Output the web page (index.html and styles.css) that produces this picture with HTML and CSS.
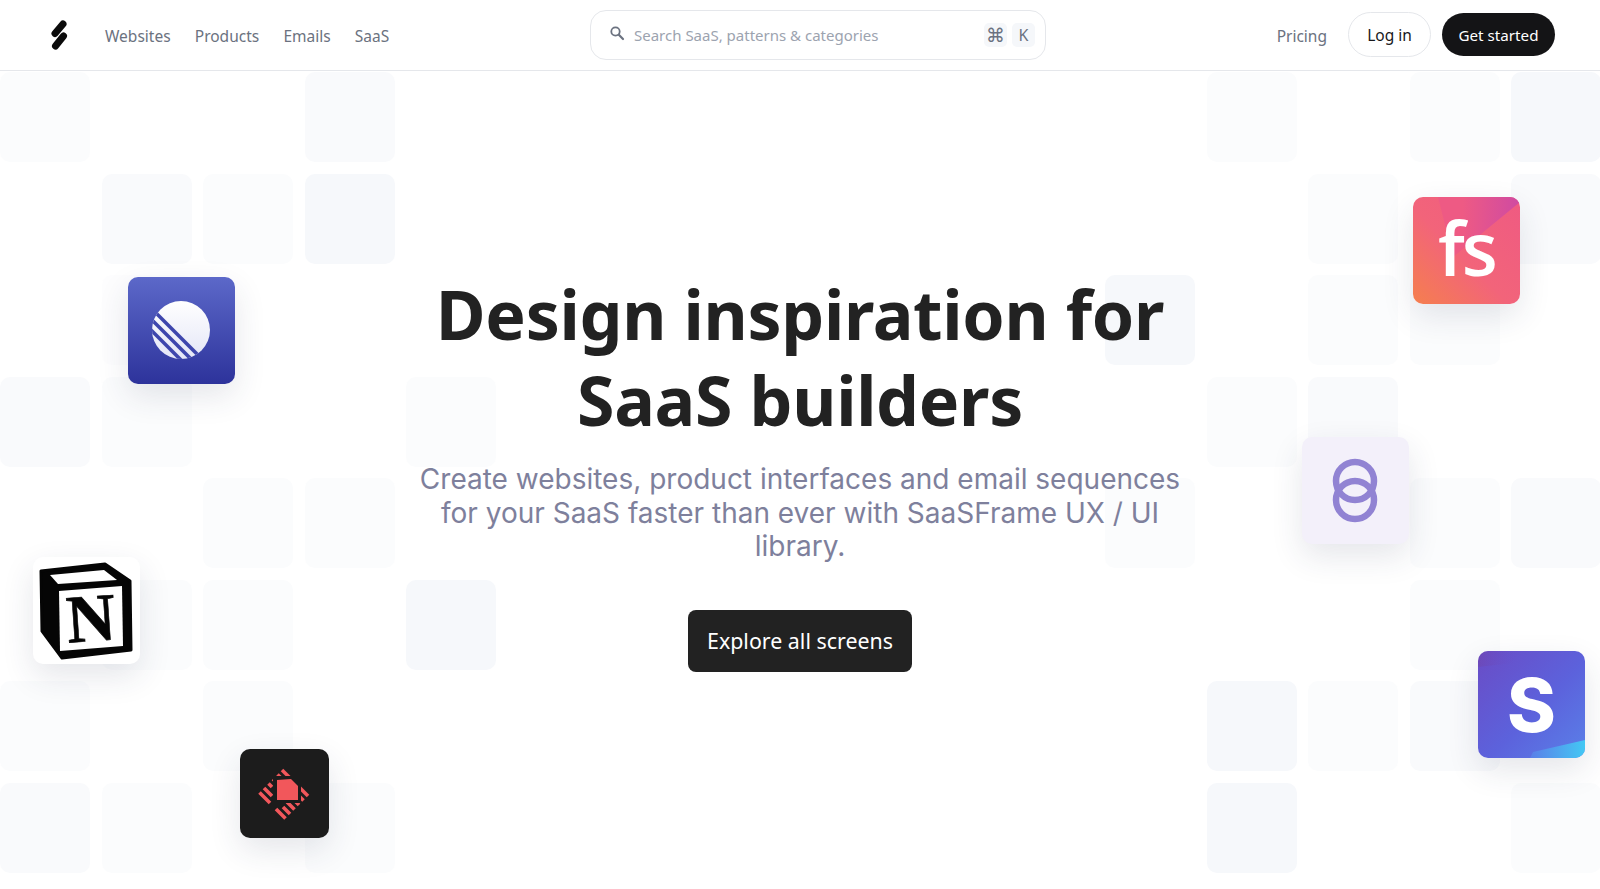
FILE: index.html
```html
<!DOCTYPE html>
<html lang="en">
<head>
    <meta charset="UTF-8">
    <meta name="viewport" content="width=device-width, initial-scale=1.0">
    <title>SaaSFrame</title>
    <link rel="stylesheet" href="styles.css">
</head>
<body>
    <header class="topbar">
        <div class="topbar-left">
            <a class="logo" href="#">
                <svg width="18" height="30" viewBox="0 0 18 30">
                    <g fill="none" stroke="#0b0b0b" stroke-width="7" stroke-linecap="round">
                        <path d="M13 4 L5 13.5"/>
                        <path d="M13.5 16 L5.5 26"/>
                    </g>
                </svg>
            </a>
            <nav class="nav-links">
                <a href="#">Websites</a>
                <a href="#">Products</a>
                <a href="#">Emails</a>
                <a href="#">SaaS</a>
            </nav>
        </div>

        <div class="search">
            <svg class="search-icon" width="16" height="16" viewBox="0 0 16 16">
                <circle cx="6.5" cy="6.5" r="4.2" fill="none" stroke="#6b7280" stroke-width="1.8"/>
                <path d="M9.8 9.8 L14 14" stroke="#6b7280" stroke-width="2.2" stroke-linecap="round"/>
            </svg>
            <span class="search-text">Search SaaS, patterns &amp; categories</span>
            <span class="key key-cmd">⌘</span>
            <span class="key">K</span>
        </div>

        <div class="topbar-right">
            <a class="pricing" href="#">Pricing</a>
            <a class="btn-login" href="#">Log in</a>
            <a class="btn-start" href="#">Get started</a>
        </div>
    </header>

    <section class="hero">
        <div class="tiles tiles-left">
            <div class="tile t3"></div><div></div><div></div><div class="tile t2"></div><div></div>
            <div></div><div class="tile t2"></div><div class="tile t3"></div><div class="tile t1"></div><div></div>
            <div></div><div class="tile t4"></div><div></div><div></div><div></div>
            <div class="tile t2"></div><div class="tile t3"></div><div></div><div></div><div class="tile t3"></div>
            <div></div><div></div><div class="tile t3"></div><div class="tile t3"></div><div></div>
            <div></div><div class="tile t3"></div><div class="tile t3"></div><div></div><div class="tile t1"></div>
            <div class="tile t3"></div><div></div><div class="tile t3"></div><div></div><div></div>
            <div class="tile t2"></div><div class="tile t3"></div><div></div><div class="tile t3"></div><div></div>
        </div>

        <div class="tiles tiles-right">
            <div></div><div class="tile t3"></div><div></div><div class="tile t3"></div><div class="tile t1"></div>
            <div></div><div></div><div class="tile t3"></div><div></div><div class="tile t2"></div>
            <div class="tile t1"></div><div></div><div class="tile t3"></div><div class="tile t3"></div><div></div>
            <div></div><div class="tile t3"></div><div class="tile t2"></div><div></div><div></div>
            <div class="tile t3"></div><div></div><div></div><div class="tile t3"></div><div class="tile t2"></div>
            <div></div><div></div><div></div><div class="tile t3"></div><div></div>
            <div></div><div class="tile t1"></div><div class="tile t3"></div><div class="tile t2"></div><div></div>
            <div></div><div class="tile t1"></div><div></div><div></div><div class="tile t3"></div>
        </div>

        <div class="app app-linear">
            <svg width="107" height="107" viewBox="0 0 107 107">
                <defs>
                    <linearGradient id="discFill" x1="0" y1="0" x2="0" y2="1">
                        <stop offset="0" stop-color="#ffffff"/>
                        <stop offset="1" stop-color="#e4e6f7"/>
                    </linearGradient>
                    <clipPath id="discClip"><circle cx="53" cy="53" r="29"/></clipPath>
                </defs>
                <circle cx="53" cy="53" r="29" fill="url(#discFill)"/>
                <g clip-path="url(#discClip)" stroke="#3e46ad" stroke-width="3.6">
                    <path d="M14 22 L84 92"/>
                    <path d="M14 33 L74 93"/>
                    <path d="M14 44 L64 94"/>
                </g>
            </svg>
        </div>

        <div class="app app-notion">
            <svg width="107" height="107" viewBox="0 0 107 107">
                <path d="M8 14 L72 7 L97 24 L98 93 L29 101 L9 74 Z" fill="#050505" stroke="#050505" stroke-width="3" stroke-linejoin="round"/>
                <path d="M17 18 L71 13 L84 23 L25 27 Z" fill="#fff"/>
                <path d="M26 34 L89 29 L90 89 L27 94 Z" fill="#fff"/>
                <text class="notion-n" x="58" y="84" text-anchor="middle" transform="rotate(-4 58 62)">N</text>
            </svg>
        </div>

        <div class="app app-rocket">
            <svg width="89" height="89" viewBox="0 0 89 89">
                <g stroke="#f2575b" stroke-width="3.6">
                    <path d="M42 21 L68 47"/>
                    <path d="M37.5 25.5 L63.5 51.5"/>
                    <path d="M33 30 L38 35 M52 49 L59 56"/>
                    <path d="M28.5 34.5 L32 38 M47 53 L54.5 60.5"/>
                    <path d="M24 39 L32 47 M43 58 L50 65"/>
                    <path d="M19.5 43.5 L30 54 M36 60 L45.5 69.5"/>
                </g>
                <rect x="33" y="27" width="28" height="27" fill="#1c1c1c"/>
                <path d="M37 31 L51 30 L58 37 L58 51 L37 51 Z" fill="#f2575b"/>
            </svg>
        </div>

        <div class="app app-fs">
            <svg class="fs-corner" width="107" height="107" viewBox="0 0 107 107">
                <defs>
                    <linearGradient id="cornerFill" x1="0" y1="0" x2="1" y2="0">
                        <stop offset="0.3" stop-color="#ee5a84"/>
                        <stop offset="1" stop-color="#cf4aa2"/>
                    </linearGradient>
                </defs>
                <path d="M25 0 L107 0 L107 5 L40 60 Z" fill="url(#cornerFill)"/>
            </svg>
            <span class="fs-text">fs</span>
        </div>

        <div class="app app-rings">
            <svg width="107" height="107" viewBox="0 0 107 107">
                <g fill="none" stroke="#9183d3" stroke-width="6.5">
                    <circle cx="53" cy="44" r="19"/>
                    <circle cx="53" cy="63" r="19"/>
                </g>
            </svg>
        </div>

        <div class="app app-stripe">
            <svg class="stripe-corner" width="107" height="107" viewBox="0 0 107 107">
                <defs>
                    <linearGradient id="stripeCorner" x1="0" y1="0" x2="1" y2="0">
                        <stop offset="0" stop-color="#5a7ee8"/>
                        <stop offset="1" stop-color="#43c8f4"/>
                    </linearGradient>
                    <linearGradient id="stripeTint" x1="0" y1="0" x2="1" y2="0">
                        <stop offset="0" stop-color="#74409f" stop-opacity="0.35"/>
                        <stop offset="1" stop-color="#6a4cc6" stop-opacity="0"/>
                    </linearGradient>
                </defs>
                <path d="M0 0 L38 0 L36 12 L0 16 Z" fill="url(#stripeTint)"/>
                <path d="M52 107 L55 101 L107 89 L107 107 Z" fill="url(#stripeCorner)"/>
            </svg>
            <span class="stripe-text">S</span>
        </div>

        <div class="hero-copy">
            <h1>Design inspiration for<br>SaaS builders</h1>
            <p>Create websites, product interfaces and email sequences for your SaaS faster than ever with SaaSFrame UX / UI library.</p>
            <a class="btn-explore" href="#">Explore all screens</a>
        </div>
    </section>
</body>
</html>
```

FILE: styles.css
```css
* {
    box-sizing: border-box;
}
body {
    margin: 0;
    background-color: #fff;
    font-family: "Noto Sans", Arial, sans-serif;
    color: #222;
    height: 889px;
    overflow: hidden;
}
a {
    text-decoration: none;
    color: inherit;
}

/* top bar */
.topbar {
    height: 71px;
    border-bottom: 1px solid #e5e7eb;
    display: grid;
    grid-template-columns: 540px 456px 1fr;
    align-items: center;
    padding: 0 45px 1px 50px;
}
.topbar-left {
    display: flex;
    align-items: center;
}
.logo {
    display: flex;
    width: 55px;
}
.nav-links {
    display: flex;
    gap: 24.2px;
    padding-top: 2px;
    font-size: 15.5px;
    color: #6b7280;
}
.search {
    height: 50px;
    border: 1px solid #e5e7eb;
    border-radius: 16px;
    display: flex;
    align-items: center;
    padding: 0 10px 0 18px;
    font-size: 15px;
    color: #9ca3af;
}
.search-icon {
    margin-right: 9px;
    margin-top: -3px;
}
.search-text {
    flex: 1;
    padding-top: 1px;
}
.key {
    width: 23px;
    height: 24px;
    margin-left: 5px;
    border-radius: 5px;
    background-color: #f5f7fa;
    color: #6b7280;
    font-size: 16px;
    display: flex;
    align-items: center;
    justify-content: center;
}
.key-cmd {
    font-family: "DejaVu Sans", sans-serif;
    font-size: 19px;
}
.topbar-right {
    display: flex;
    align-items: center;
    justify-content: flex-end;
}
.pricing {
    font-size: 15.5px;
    color: #6b7280;
    margin-right: 21px;
    padding-top: 2px;
}
.btn-login {
    width: 83px;
    height: 45px;
    border: 1px solid #e5e7eb;
    border-radius: 23px;
    display: flex;
    align-items: center;
    justify-content: center;
    font-size: 15.5px;
    color: #18181b;
    margin-right: 11px;
}
.btn-start {
    width: 113px;
    height: 43px;
    border-radius: 22px;
    background-color: #141416;
    color: #fff;
    display: flex;
    align-items: center;
    justify-content: center;
    font-size: 15.2px;
}

/* background tiles */
.hero {
    position: relative;
    height: 818px;
    overflow: hidden;
}
.tiles {
    position: absolute;
    top: 1px;
    width: 495px;
    display: grid;
    grid-template-columns: repeat(5, 90px);
    grid-auto-rows: 90px;
    gap: 11.5px;
}
.tiles-left {
    left: 0;
}
.tiles-right {
    right: 0;
}
.tile {
    border-radius: 10px;
}
.t1 {
    background-color: #f6f8fb;
}
.t2 {
    background-color: #f9fafc;
}
.t3 {
    background-color: #fbfcfd;
}
.t4 {
    background-color: #fdfdfe;
}

/* floating app icons */
.app {
    position: absolute;
    width: 107px;
    height: 107px;
    border-radius: 10px;
    box-shadow: 0 12px 32px rgba(40, 50, 80, 0.12);
    display: flex;
    align-items: center;
    justify-content: center;
}
.app svg {
    display: block;
    border-radius: 10px;
}
.app-linear {
    left: 128px;
    top: 206px;
    background: linear-gradient(180deg, #5c68c9, #2d339b);
}
.app-notion {
    left: 33px;
    top: 486px;
    background-color: #fff;
}
.notion-n {
    font-family: "Liberation Serif", serif;
    font-weight: 700;
    font-size: 68px;
    fill: #050505;
    stroke: #050505;
    stroke-width: 0.6px;
}
.app-rocket {
    left: 240px;
    top: 678px;
    width: 89px;
    height: 89px;
    background-color: #1c1c1c;
}
.app-fs {
    left: 1413px;
    top: 126px;
    background: linear-gradient(45deg, #f57f4e 0%, #f2647a 45%, #ef5a82 100%);
}
.fs-corner,
.stripe-corner {
    position: absolute;
    left: 0;
    top: 0;
}
.fs-text {
    position: relative;
    color: #fff;
    font-family: "Open Sans", sans-serif;
    font-weight: 600;
    font-size: 74px;
    line-height: 1;
    letter-spacing: -3px;
    margin-top: -6px;
}
.app-rings {
    left: 1302px;
    top: 366px;
    background-color: #f3f0fa;
}
.app-stripe {
    left: 1478px;
    top: 580px;
    background: linear-gradient(135deg, #6a4cc6 0%, #5c62dc 55%, #5a80e8 100%);
}
.stripe-text {
    position: relative;
    color: #fff;
    font-family: Inter, sans-serif;
    font-weight: 800;
    font-size: 74px;
    line-height: 1;
}

/* main copy */
.hero-copy {
    position: relative;
    display: flex;
    flex-direction: column;
    align-items: center;
    text-align: center;
    padding-top: 200px;
}
h1 {
    margin: 0;
    font-size: 68px;
    line-height: 86px;
    font-weight: 700;
    color: #222;
    letter-spacing: -0.3px;
}
.hero-copy p {
    width: 790px;
    margin: 20px 0 0;
    font-family: Inter, sans-serif;
    font-size: 28px;
    line-height: 33.5px;
    color: #7e809c;
}
.btn-explore {
    margin-top: 46px;
    width: 224px;
    height: 62px;
    border-radius: 8px;
    background-color: #222;
    color: #fff;
    font-size: 21.4px;
    display: flex;
    align-items: center;
    justify-content: center;
}
```
